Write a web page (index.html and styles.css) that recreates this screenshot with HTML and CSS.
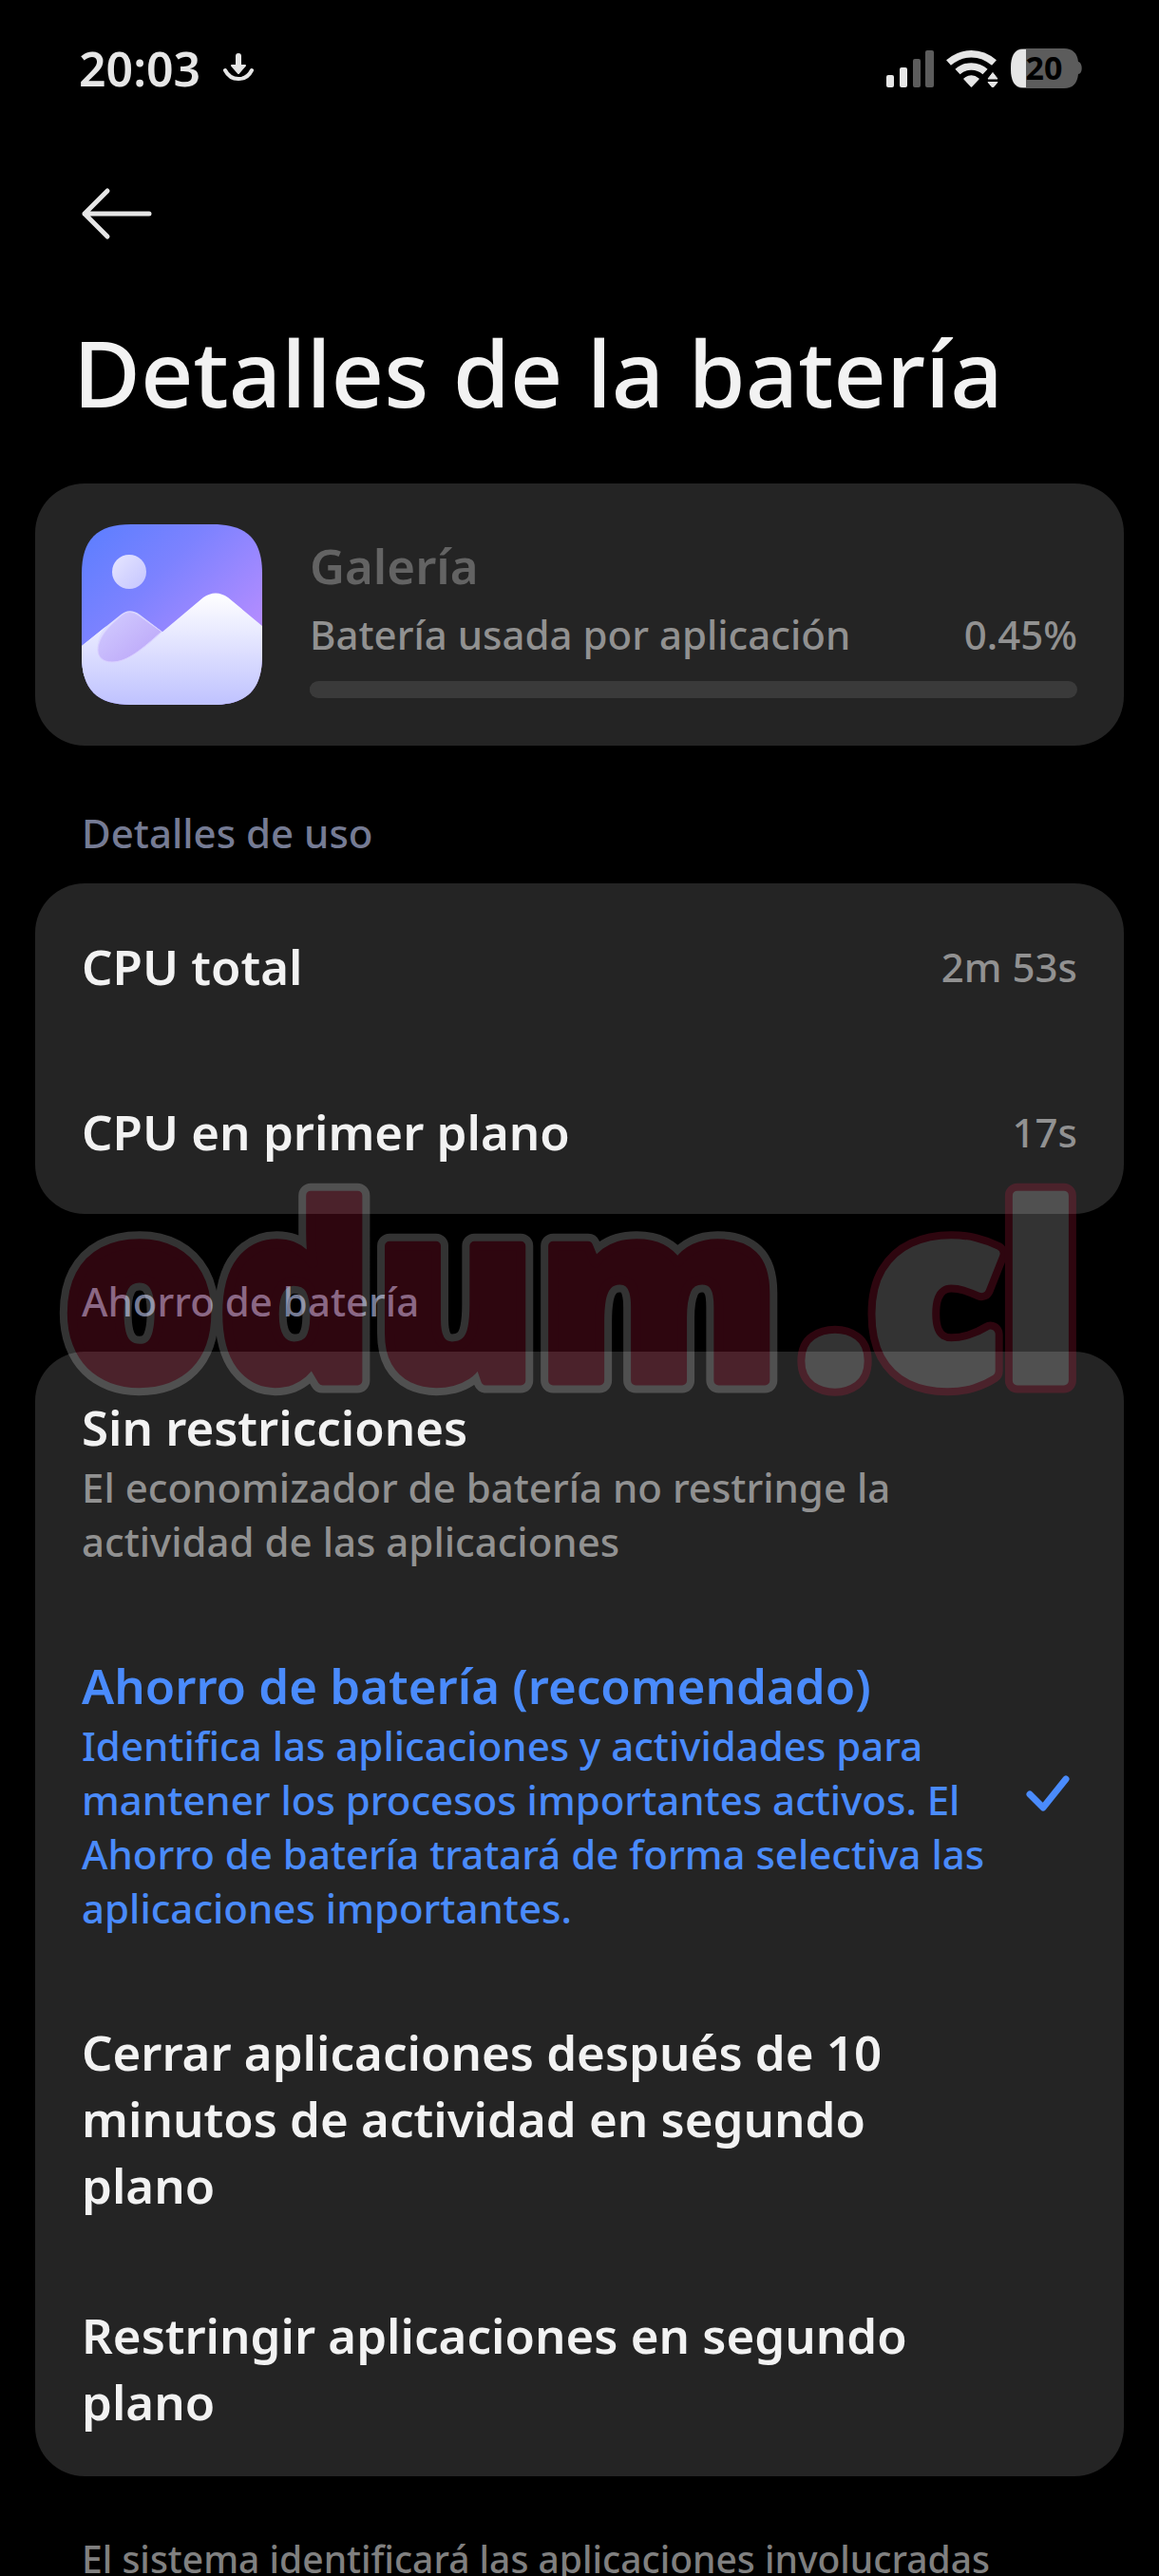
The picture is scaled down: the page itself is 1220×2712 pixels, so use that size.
FILE: index.html
```html
<!DOCTYPE html>
<html lang="es">
<head>
    <meta charset="UTF-8">
    <meta name="viewport" content="width=device-width, initial-scale=1.0">
    <title>Detalles de la batería</title>
    <link rel="stylesheet" href="styles.css">
</head>
<body>
    <div class="screen">
        <div class="status-bar">
            <span class="clock">20:03</span>
            <svg class="download-icon" width="32" height="32" viewBox="0 0 32 32">
                <path d="M16 3v12" stroke="#e6e6e6" stroke-width="6" stroke-linecap="round"/>
                <path d="M9 13h14l-7 8z" fill="#e6e6e6" stroke="#e6e6e6" stroke-width="2" stroke-linejoin="round"/>
                <path d="M2 18C8 30 24 30 30 18" fill="none" stroke="#e6e6e6" stroke-width="4" stroke-linecap="round"/>
            </svg>
            <div class="status-icons">
                <svg width="50" height="40" viewBox="0 0 50 40">
                    <rect x="0" y="27" width="8" height="13" rx="2" fill="#e6e6e6"/>
                    <rect x="14" y="19" width="8" height="21" rx="2" fill="#e6e6e6"/>
                    <rect x="28" y="10" width="8" height="30" rx="2" fill="#5c5c5c"/>
                    <rect x="41" y="1" width="9" height="39" rx="2" fill="#5c5c5c"/>
                </svg>
                <svg width="55" height="40" viewBox="0 0 55 40">
                    <path d="M2.500 14C17 1.500 36 1.500 50.500 14" fill="none" stroke="#e6e6e6" stroke-width="7.500"/>
                    <path d="M12 23.500C20 16 33 16 41 23.500" fill="none" stroke="#e6e6e6" stroke-width="7.500"/>
                    <path d="M19 31Q26.500 25 34 31L26.500 39z" fill="#e6e6e6" stroke="#e6e6e6" stroke-width="1.500" stroke-linejoin="round"/>
                    <path d="M44 31L49 24.500 54 31z" fill="#e6e6e6" stroke="#e6e6e6" stroke-linejoin="round"/>
                    <path d="M44 34.500h10L49 40.500z" fill="#e6e6e6" stroke="#e6e6e6" stroke-linejoin="round"/>
                </svg>
                <svg class="battery" width="75" height="42" viewBox="0 0 75 42">
                    <path d="M14 0H56C65 0 70 5 71 14C76 15 76 27 71 27C70 37 65 42 56 42H14C4 42 0 35 0 21S4 0 14 0z" fill="#5c5c5c"/>
                    <path d="M16 1H12C4 1 0 8 0 21S4 41 12 41H16z" fill="#e6e6e6"/>
                    <text class="battery-level" x="35" y="33" text-anchor="middle">20</text>
                </svg>
            </div>
        </div>

        <div class="nav">
            <button class="back" type="button" aria-label="Atrás">
                <svg width="76" height="56" viewBox="0 0 76 56">
                    <path d="M29 4L5 28l24 24M5 28h68" fill="none" stroke="#e6e6e6" stroke-width="5" stroke-linecap="round" stroke-linejoin="round"/>
                </svg>
            </button>
        </div>

        <h1>Detalles de la batería</h1>

        <div class="card app-card">
            <svg class="app-icon" width="190" height="190" viewBox="0 0 190 190">
                <defs>
                    <linearGradient id="sky" x1="0" y1="0" x2="1" y2="1">
                        <stop offset="0" stop-color="#5a7eff"/>
                        <stop offset="0.35" stop-color="#7c82ff"/>
                        <stop offset="0.75" stop-color="#b18cff"/>
                    </linearGradient>
                    <linearGradient id="snow" x1="0" y1="0" x2="0" y2="1">
                        <stop offset="0" stop-color="#ffffff"/>
                        <stop offset="1" stop-color="#bfc2ff"/>
                    </linearGradient>
                    <linearGradient id="moon" x1="0" y1="0" x2="1" y2="1">
                        <stop offset="0" stop-color="#e6e6ff"/>
                        <stop offset="1" stop-color="#c4c4ff"/>
                    </linearGradient>
                    <linearGradient id="hill" x1="0" y1="0" x2="1" y2="1">
                        <stop offset="0" stop-color="#d3ceff"/>
                        <stop offset="1" stop-color="#b9a2f8"/>
                    </linearGradient>
                    <clipPath id="tile">
                        <path d="M52 0H138C174 0 190 16 190 52V138C190 174 174 190 138 190H52C16 190 0 174 0 138V52C0 16 16 0 52 0z"/>
                    </clipPath>
                </defs>
                <g clip-path="url(#tile)">
                    <rect width="190" height="190" fill="url(#sky)"/>
                    <circle cx="50" cy="50" r="18" fill="url(#moon)"/>
                    <path d="M0 128L40 96Q50 87 61 95L90 117 60 160H0z" fill="#dedeff"/>
                    <path d="M0 190V128L26 107C10 125 15 145 32 145C48 145 66 132 84 114L128 77Q141 68 154 77L190 107V190z" fill="url(#snow)"/>
                    <path d="M32 105L42 96Q50 89 60 96L84 113C64 131 48 145 32 145C12 145 12 124 32 105z" fill="url(#hill)" stroke="#d9cfff" stroke-width="1"/>
                </g>
            </svg>
            <div class="app-info">
                <div class="app-name">Galería</div>
                <div class="app-usage">
                    <label for="usage">Batería usada por aplicación</label>
                    <span>0.45%</span>
                </div>
                <progress id="usage" value="0.45" max="100"></progress>
            </div>
        </div>

        <h2>Detalles de uso</h2>
        <dl class="card">
            <div class="usage-row">
                <dt>CPU total</dt>
                <dd>2m 53s</dd>
            </div>
            <div class="usage-row">
                <dt>CPU en primer plano</dt>
                <dd>17s</dd>
            </div>
        </dl>

        <h2>Ahorro de batería</h2>
        <div class="card">
            <label class="option">
                <input type="radio" name="saver">
                <span class="option-text">
                    <span class="option-title">Sin restricciones</span>
                    <span class="option-desc">El economizador de batería no restringe la actividad de las aplicaciones</span>
                </span>
                <svg class="check" width="46" height="38" viewBox="0 0 46 38"><path d="M4 20l14 14L42 4"/></svg>
            </label>
            <label class="option">
                <input type="radio" name="saver" checked>
                <span class="option-text">
                    <span class="option-title">Ahorro de batería (recomendado)</span>
                    <span class="option-desc">Identifica las aplicaciones y actividades para mantener los procesos importantes activos. El Ahorro de batería tratará de forma selectiva las aplicaciones importantes.</span>
                </span>
                <svg class="check" width="46" height="38" viewBox="0 0 46 38"><path d="M4 20l14 14L42 4"/></svg>
            </label>
            <label class="option">
                <input type="radio" name="saver">
                <span class="option-text">
                    <span class="option-title">Cerrar aplicaciones después de 10 minutos de actividad en segundo plano</span>
                </span>
                <svg class="check" width="46" height="38" viewBox="0 0 46 38"><path d="M4 20l14 14L42 4"/></svg>
            </label>
            <label class="option">
                <input type="radio" name="saver">
                <span class="option-text">
                    <span class="option-title">Restringir aplicaciones en segundo plano</span>
                </span>
                <svg class="check" width="46" height="38" viewBox="0 0 46 38"><path d="M4 20l14 14L42 4"/></svg>
            </label>
        </div>

        <p class="footnote">El sistema identificará las aplicaciones involucradas</p>

        <!-- marca de agua -->
        <svg class="watermark" viewBox="0 0 1100 250" aria-label="odum.cl">
            <defs>
                <text id="wm-name" x="4" y="218">odum</text>
                <text id="wm-tld" x="782" y="218">.cl</text>
            </defs>
            <use href="#wm-name" class="wm-white wm-outer"/>
            <use href="#wm-name" class="wm-red wm-inner"/>
            <use href="#wm-tld" class="wm-red wm-outer"/>
            <use href="#wm-tld" class="wm-white wm-inner"/>
        </svg>
    </div>
</body>
</html>
```

FILE: styles.css
```css
* {
    margin: 0;
    padding: 0;
    box-sizing: border-box;
}

body {
    font-family: 'Noto Sans', sans-serif;
    background: #000;
    color: #f2f2f2;
}

.screen {
    position: relative;
    height: 100vh;
    overflow: hidden;
    padding: 0 37px;
}

.status-bar {
    display: flex;
    align-items: center;
    height: 144px;
    padding: 0 44px 0 46px;
    color: #e6e6e6;
}

.clock {
    font-size: 50px;
    font-weight: 600;
}

.download-icon {
    margin-left: 24px;
}

.status-icons {
    display: flex;
    align-items: center;
    gap: 13px;
    margin-left: auto;
}

.battery {
    overflow: visible;
}

.battery-level {
    font-size: 34px;
    font-weight: 700;
    fill: #000;
}

.nav {
    display: flex;
    align-items: center;
    height: 162px;
    padding: 0 47px;
}

.back {
    display: flex;
    background: none;
    border: none;
    cursor: pointer;
}

h1 {
    margin: 25px 40px 58px;
    font-size: 97px;
    font-weight: 500;
    line-height: 120px;
}

h2 {
    padding: 63px 49px 25px;
    font-size: 42px;
    font-weight: 500;
    line-height: 57px;
    color: #757b94;
}

.card {
    background: #242424;
    border-radius: 52px;
    overflow: hidden;
}

.app-card {
    display: flex;
    align-items: center;
    gap: 50px;
    padding: 43px 49px;
}

.app-icon {
    flex: none;
}

.app-info {
    flex: 1;
}

.app-name {
    font-size: 51px;
    font-weight: 600;
    line-height: 72px;
    color: #636363;
}

.app-usage {
    display: flex;
    justify-content: space-between;
    margin-bottom: 12px;
    font-size: 42px;
    font-weight: 500;
    line-height: 74px;
    color: #919191;
}

progress {
    display: block;
    width: 100%;
    height: 18px;
    appearance: none;
    border: none;
    border-radius: 9px;
    overflow: hidden;
}

progress::-webkit-progress-bar,
progress::-webkit-progress-value {
    background: #3a3a3a;
}

.usage-row {
    display: flex;
    align-items: center;
    justify-content: space-between;
    height: 174px;
    padding: 0 49px;
}

.usage-row dt {
    font-size: 51px;
    font-weight: 600;
}

.usage-row dd {
    font-size: 42px;
    font-weight: 500;
    color: #919191;
}

.option {
    display: flex;
    align-items: center;
    gap: 40px;
    padding: 44px 57px 44px 49px;
    cursor: pointer;
}

.option input {
    position: absolute;
    opacity: 0;
}

.option-text {
    flex: 1;
}

.option-title,
.option-desc {
    display: block;
}

.option-title {
    font-size: 51px;
    font-weight: 600;
    line-height: 70px;
}

.option-desc {
    font-size: 42px;
    font-weight: 500;
    line-height: 57px;
    color: #919191;
}

.check {
    flex: none;
    visibility: hidden;
}

.check path {
    fill: none;
    stroke: #4a8bfc;
    stroke-width: 7;
    stroke-linecap: round;
    stroke-linejoin: round;
}

input:checked ~ .check {
    visibility: visible;
}

input:checked ~ .option-text span {
    color: #4a8bfc;
}

.footnote {
    padding: 58px 49px 0;
    font-size: 39px;
    font-weight: 500;
    line-height: 57px;
    color: #808080;
}

.watermark {
    position: absolute;
    top: 1236px;
    left: 5%;
    width: 90%;
    overflow: visible;
    opacity: 0.2;
    pointer-events: none;
    font-size: 257px;
    font-weight: 900;
    stroke-linejoin: round;
}

.wm-white {
    fill: #fff;
    stroke: #fff;
}

.wm-red {
    fill: #e61e4b;
    stroke: #e61e4b;
}

.wm-outer {
    stroke-width: 26px;
}

.wm-inner {
    stroke-width: 10px;
}
```
